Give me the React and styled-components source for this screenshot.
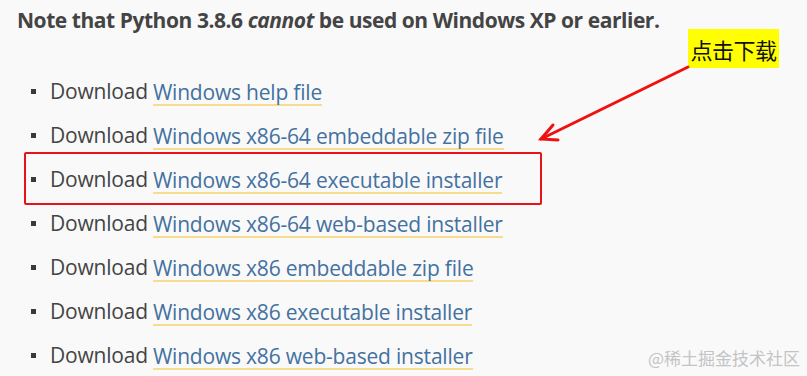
import React from 'react';
import styled, { createGlobalStyle } from 'styled-components';

const GlobalStyle = createGlobalStyle`
  html, body {
    margin: 0;
    padding: 0;
    background: #f9f9f9;
  }
  body {
    width: 807px;
    height: 376px;
    overflow: hidden;
  }
`;

const Page = styled.div`
  position: relative;
  width: 807px;
  height: 376px;
  padding: 5px 0 0 17px;
  box-sizing: border-box;
  font-family: 'Open Sans', 'Noto Sans', sans-serif;
  color: #444;
`;

const Note = styled.p`
  margin: 0;
  font-size: 21px;
  font-weight: 700;
  letter-spacing: -0.45px;
  color: #444;
  line-height: 30px;
`;

const DownloadList = styled.ul`
  list-style: none;
  margin: 41px 0 0;
  padding: 0 0 0 14px;
  display: flex;
  flex-direction: column;
  gap: 14px;
`;

const Item = styled.li`
  position: relative;
  display: flex;
  align-items: center;
  height: 30px;
  font-size: 21px;
  letter-spacing: -0.2px;
  white-space: nowrap;

  &::before {
    content: '';
    width: 5px;
    height: 5px;
    background: #3a3a3a;
    margin-right: 14px;
  }

  ${p => p.$boxed && `
    &::after {
      content: '';
      position: absolute;
      left: -7px;
      top: -12px;
      width: 518px;
      height: 53px;
      box-sizing: border-box;
      border: 2.5px solid #e8121b;
      border-radius: 2px;
    }
  `}
`;

const Link = styled.a`
  margin-left: 5px;
  color: #4371a0;
  text-decoration: none;
  border-bottom: 2px solid #f6dc8c;
  line-height: 24px;
  padding-top: 4px;
`;

const Tag = styled.div`
  position: absolute;
  left: 688px;
  top: 29px;
  width: 91px;
  height: 39px;
  background: #ffff00;
  display: flex;
  align-items: center;
  justify-content: center;
  font-family: 'Noto Sans CJK SC', sans-serif;
  font-size: 22px;
  letter-spacing: -0.5px;
  color: #111;
`;

const Arrow = styled.svg`
  position: absolute;
  left: 0;
  top: 0;
  pointer-events: none;
`;

const Watermark = styled.div`
  position: absolute;
  right: 7px;
  bottom: 6px;
  font-family: 'Noto Sans CJK SC', sans-serif;
  font-size: 17px;
  color: #c4c4c4;
`;

const rows = [
  'Windows help file',
  'Windows x86-64 embeddable zip file',
  'Windows x86-64 executable installer',
  'Windows x86-64 web-based installer',
  'Windows x86 embeddable zip file',
  'Windows x86 executable installer',
  'Windows x86 web-based installer',
];

export default function App() {
  return (
    <>
      <GlobalStyle />
      <Page>
        <Note>
          Note that Python 3.8.6 <i>cannot</i> be used on Windows XP or earlier.
        </Note>
        <DownloadList>
          {rows.map((label, i) => (
            <Item key={label} $boxed={i === 2}>
              Download<Link href="#">{label}</Link>
            </Item>
          ))}
        </DownloadList>
        <Tag>点击下载</Tag>
        <Arrow width="807" height="376">
          <g stroke="#f01010" strokeWidth="3" strokeLinecap="round" fill="none">
            <line x1="688" y1="67" x2="541" y2="139" />
            <polyline points="553,125 541,139 558,140" />
          </g>
        </Arrow>
        <Watermark>@稀土掘金技术社区</Watermark>
      </Page>
    </>
  );
}
